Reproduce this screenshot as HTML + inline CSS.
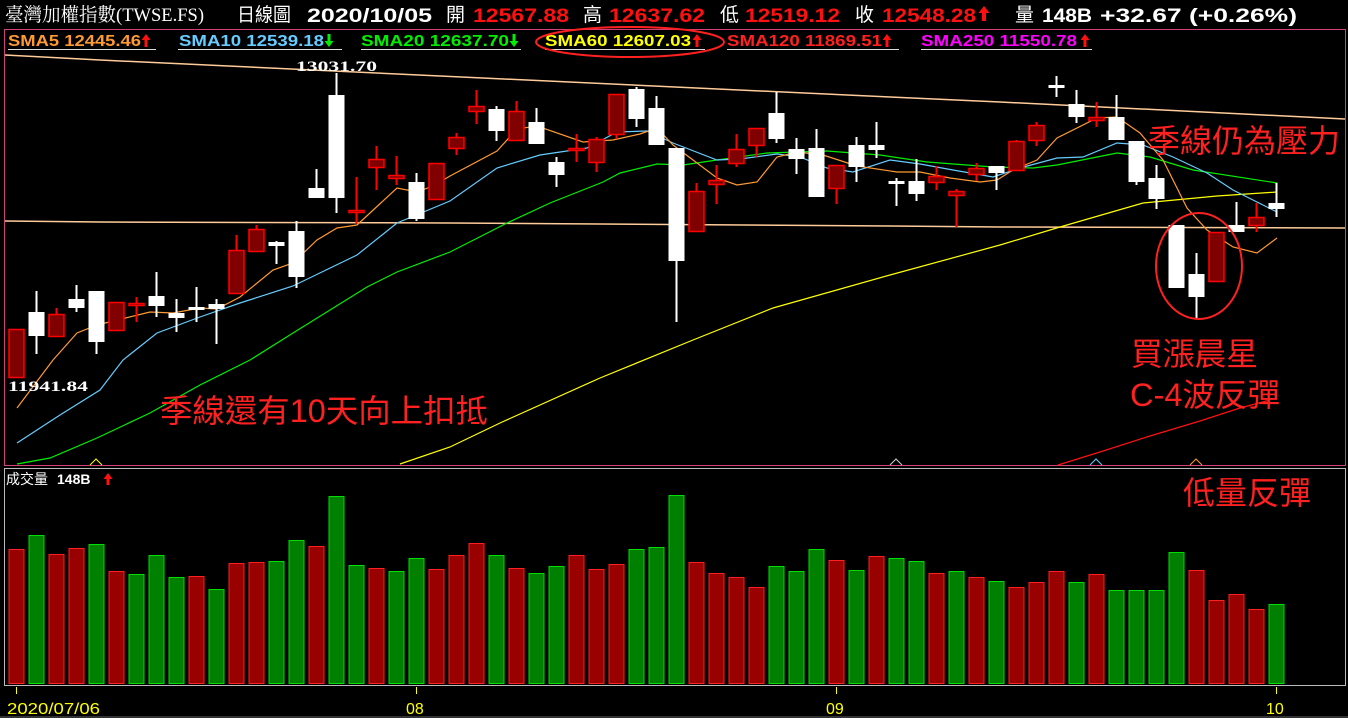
<!DOCTYPE html>
<html><head><meta charset="utf-8"><style>
html,body{margin:0;padding:0;background:#000;width:1348px;height:718px;overflow:hidden}
svg{display:block}
.h{font-family:"Liberation Sans","Noto Sans CJK TC",sans-serif;font-size:19px;fill:#fff}
.b{font-weight:bold}
.r{fill:#ff1010}
.s{font-family:"Liberation Sans",sans-serif;font-size:16px;font-weight:bold}
.a{font-family:"Liberation Sans","Noto Sans CJK TC",sans-serif;font-size:32px;fill:#ff2020}
</style></head><body>
<svg id="c" width="1348" height="718" xmlns="http://www.w3.org/2000/svg">
<rect width="1348" height="718" fill="#000"/>
<!-- header -->
<text class="h" x="5" y="21" textLength="199" lengthAdjust="spacingAndGlyphs" style="font-family:'Liberation Serif','Noto Serif CJK SC',serif">臺灣加權指數(TWSE.FS)</text>
<text class="h" x="237" y="21" textLength="54" lengthAdjust="spacingAndGlyphs">日線圖</text>
<text class="h b" x="307" y="22" textLength="125" lengthAdjust="spacingAndGlyphs">2020/10/05</text>
<text class="h" x="446" y="21">開</text>
<text class="h b r" x="473" y="22" textLength="96" lengthAdjust="spacingAndGlyphs">12567.88</text>
<text class="h" x="583" y="21">高</text>
<text class="h b r" x="609" y="22" textLength="96" lengthAdjust="spacingAndGlyphs">12637.62</text>
<text class="h" x="720" y="21">低</text>
<text class="h b r" x="745" y="22" textLength="95" lengthAdjust="spacingAndGlyphs">12519.12</text>
<text class="h" x="855" y="21">收</text>
<text class="h b r" x="882" y="22" textLength="94" lengthAdjust="spacingAndGlyphs">12548.28</text>
<path d="M984 6 l-5.5 7 h3.5 v8 h4 v-8 h3.5 z" fill="#ff1010"/>
<text class="h" x="1015" y="21">量</text>
<text class="h b" x="1042" y="22" textLength="50" lengthAdjust="spacingAndGlyphs">148B</text>
<text class="h b" x="1100" y="22" textLength="197" lengthAdjust="spacingAndGlyphs">+32.67 (+0.26%)</text>
<!-- frames -->
<rect x="4.5" y="29.5" width="1341" height="436" fill="none" stroke="#d0407a" stroke-width="1"/>
<rect x="4.5" y="468.5" width="1341" height="217" fill="none" stroke="#bbbbbb" stroke-width="1"/>
<!-- SMA legend -->
<text class="s" x="8" y="46" fill="#ff9933" textLength="133" lengthAdjust="spacingAndGlyphs">SMA5 12445.46</text>
<text class="s" x="179" y="46" fill="#66ccff" textLength="145" lengthAdjust="spacingAndGlyphs">SMA10 12539.18</text>
<text class="s" x="361" y="46" fill="#00ee00" textLength="148" lengthAdjust="spacingAndGlyphs">SMA20 12637.70</text>
<text class="s" x="545" y="46" fill="#ffff00" textLength="146" lengthAdjust="spacingAndGlyphs">SMA60 12607.03</text>
<text class="s" x="727" y="46" fill="#ff2020" textLength="155" lengthAdjust="spacingAndGlyphs">SMA120 11869.51</text>
<text class="s" x="921" y="46" fill="#ff00ff" textLength="156" lengthAdjust="spacingAndGlyphs">SMA250 11550.78</text>
<g id="arrows"></g>
<g stroke="#ddd" stroke-width="1">
<line x1="8" y1="49.5" x2="156" y2="49.5"/><line x1="178" y1="49.5" x2="342" y2="49.5"/>
<line x1="361" y1="49.5" x2="521" y2="49.5"/><line x1="545" y1="49.5" x2="705" y2="49.5"/>
<line x1="727" y1="49.5" x2="899" y2="49.5"/><line x1="921" y1="49.5" x2="1092" y2="49.5"/>
</g>
<ellipse cx="630" cy="42" rx="94" ry="15" fill="none" stroke="#ff2020" stroke-width="2"/>
<!-- trend lines -->
<polyline fill="none" stroke="#ffcc99" stroke-width="1.5" points="5,55 100,60 440,76 890,97 1000,102 1345,119"/>
<polyline fill="none" stroke="#ffcc99" stroke-width="1.5" points="5,221 100,222 450,223 890,226 1000,227 1345,228"/>
<!-- MAs -->
<polyline fill="none" stroke="#ffff00" stroke-width="1.2" points="400,464 450,447 500,423 600,378 693,340 773,308 890,275 1000,245 1060,227 1143,203 1217,196 1277,192"/>
<polyline fill="none" stroke="#ff1010" stroke-width="1.2" points="1058,465 1100,452 1150,436 1200,421 1240,408 1270,400"/>
<polyline fill="none" stroke="#00ee00" stroke-width="1.2" points="17,464 50,458 97,438 150,413 200,385 250,360 293,333 367,287 397,272 450,252 507,223 550,203 603,182 620,173 657,164 683,165 717,160 767,153 827,151 880,155 927,162 993,167 1033,168 1057,165 1097,157 1117,153 1150,157 1193,170 1277,183"/>
<polyline fill="none" stroke="#66ccff" stroke-width="1.2" points="17,443 60,415 100,390 123,360 157,333 200,317 240,303 293,286 357,255 397,223 450,201 497,168 540,155 587,148 617,132 647,131 673,143 717,160 740,159 777,154 800,157 827,168 853,172 890,160 920,164 953,170 993,177 1020,168 1057,158 1083,157 1117,143 1143,145 1173,157 1207,173 1233,190 1277,212"/>
<polyline fill="none" stroke="#ff9933" stroke-width="1.2" points="17,408 53,360 77,333 97,325 150,312 173,313 200,308 217,309 240,297 273,270 293,263 317,240 337,228 357,225 397,188 417,192 433,186 450,176 497,151 517,129 537,126 583,142 613,140 640,134 657,128 673,145 717,178 737,185 757,182 777,157 797,152 823,155 857,166 897,172 920,172 950,178 980,182 997,180 1013,170 1037,160 1057,138 1097,118 1117,117 1140,133 1163,160 1187,208 1207,230 1233,247 1257,253 1277,238"/>
<g id="cd"></g>
<!-- labels -->
<text x="296" y="71" fill="#fff" font-family="Liberation Serif,serif" font-weight="bold" font-size="15" textLength="81" lengthAdjust="spacingAndGlyphs">13031.70</text>
<text x="8" y="391" fill="#fff" font-family="Liberation Serif,serif" font-weight="bold" font-size="15" textLength="80" lengthAdjust="spacingAndGlyphs">11941.84</text>
<!-- triangles -->
<g fill="none" stroke-width="1">
<polyline points="90,465 96,459 102,465" stroke="#ffff00"/>
<polyline points="890,465 896,459 902,465" stroke="#cccccc"/>
<polyline points="1090,465 1096,459 1102,465" stroke="#66ccff"/>
<polyline points="1190,465 1196,459 1202,465" stroke="#ff9933"/>
</g>
<ellipse cx="1199" cy="266" rx="43" ry="53" fill="none" stroke="#ff2020" stroke-width="2"/>
<!-- annotations -->
<text class="a" x="1148" y="152" textLength="192" lengthAdjust="spacingAndGlyphs">季線仍為壓力</text>
<text class="a" x="1131" y="365" textLength="127" lengthAdjust="spacingAndGlyphs">買漲晨星</text>
<text class="a" x="1130" y="406" textLength="150" lengthAdjust="spacingAndGlyphs">C-4波反彈</text>
<text class="a" x="160" y="422" textLength="328" lengthAdjust="spacingAndGlyphs">季線還有10天向上扣抵</text>
<text class="a" x="1183" y="504" textLength="128" lengthAdjust="spacingAndGlyphs">低量反彈</text>
<!-- volume -->
<text x="6" y="484" fill="#fff" font-family="Liberation Sans,Noto Sans CJK TC,sans-serif" font-size="14">成交量</text>
<text x="57" y="484" fill="#fff" font-family="Liberation Sans,sans-serif" font-weight="bold" font-size="14">148B</text>
<path d="M108 473 l-4.5 6 h3 v6 h3 v-6 h3 z" fill="#ff1010"/>
<g id="vol"></g>
<!-- axis -->
<g stroke="#ffff00" stroke-width="1">
<line x1="16.5" y1="687" x2="16.5" y2="694"/><line x1="416.5" y1="687" x2="416.5" y2="694"/>
<line x1="836.5" y1="687" x2="836.5" y2="694"/><line x1="1276.5" y1="687" x2="1276.5" y2="694"/>
</g>
<g fill="#ffff00" font-family="Liberation Sans,sans-serif" font-size="16">
<text x="7" y="714" textLength="93" lengthAdjust="spacingAndGlyphs">2020/07/06</text><text x="406" y="714">08</text><text x="826" y="714">09</text><text x="1266" y="714">10</text>
</g>
<rect x="0" y="716" width="1348" height="2" fill="#333"/>
</svg>
<script>
var NS="http://www.w3.org/2000/svg";
function el(p,t,a){var e=document.createElementNS(NS,t);for(var k in a)e.setAttribute(k,a[k]);p.appendChild(e);return e;}
var C=[["r",329,378],["w",312,336,291,354],["r",314,337,308,337],["w",299,308,285,312],["w",291,342,291,354],["r",302,331],["r",303,306,297,322],["w",296,306,272,317],["w",313,318,299,332],["w",307,310,287,322],["w",304,309,299,344],["r",250,294,235,294],["r",229,252,225,252],["w",242,246,241,264],["w",231,277,221,288],["w",188,198,169,198],["w",95,198,73,213],["r",210,213,177,224],["r",159,168,146,190],["r",175,179,156,185],["w",182,219,173,221],["r",163,200],["r",137,149,133,155],["r",106,112,90,124],["w",109,131,106,141],["r",111,141,101,141],["w",122,144,108,144],["w",162,175,157,187],["r",148,150,134,162],["r",139,163,137,172],["r",94,135,94,139],["w",89,119,87,127],["w",108,145,96,145],["w",148,261,148,322],["r",191,232,183,232],["r",180,185,165,204],["r",149,164,134,167],["r",128,146,128,157],["w",113,139,92,143],["w",149,159,138,174],["w",148,197,129,197],["r",165,189,165,204],["w",145,167,137,182],["w",145,150,122,158],["w",181,184,178,206],["w",181,194,159,201],["r",176,183,166,190],["r",191,196,189,227],["r",168,175,163,181],["w",166,173,166,190],["r",141,171,140,171],["r",125,141,122,146],["w",85,88,76,97],["w",104,117,90,123],["r",117,121,102,127],["w",117,140,95,140],["w",141,182,141,185],["w",178,199,165,209],["w",225,288],["w",274,297,253,318],["r",232,282],["w",225,232,202,232],["r",217,226,203,232],["w",203,209,183,217]];
var g=document.getElementById("cd");
C.forEach(function(d,i){var c=16.5+20*i,red=d[0]=="r",col=red?"#ff0000":"#ffffff";
 if(d.length>3)el(g,"line",{x1:c,x2:c,y1:d[3],y2:d[4],stroke:col,"stroke-width":2});
 var h=Math.max(d[2]-d[1],3);
 if(red)el(g,"rect",{x:c-7.5,y:d[1]+0.5,width:15,height:h-1,fill:"#800000",stroke:"#ff0000","stroke-width":1.5});
 else el(g,"rect",{x:c-8,y:d[1],width:16,height:h,fill:"#fff"});});
var V=[549,535,554,548,544,571,574,555,577,576,589,563,562,561,540,546,496,565,568,571,558,569,555,543,555,568,573,566,555,569,564,549,547,495,562,573,577,587,566,571,549,560,570,556,558,561,573,571,577,581,587,582,571,582,574,590,590,590,552,570,600,594,609,604];
var VC="rgrrgrgggrgrrggrggrggrrrgrggrrrgggrrrrgggrgrggrgrgrrrgrggggrrrr";
var v=document.getElementById("vol");
V.forEach(function(t,i){var c=16.5+20*i,r=VC[i]=="r";
 el(v,"rect",{x:c-7.5,y:t+0.5,width:15,height:683-t,fill:r?"#990000":"#008000",stroke:r?"#ff2020":"#00dd00","stroke-width":1});});
var A=document.getElementById("arrows");
[[146,"#ff1010",1],[329,"#00ee00",0],[514,"#00ee00",0],[697,"#ff1010",1],[887,"#ff1010",1],[1085,"#ff1010",1]].forEach(function(a){
 var x=a[0];var d=a[2]?"M"+x+" 34 l-4.5 6 h3 v7 h3 v-7 h3 z":"M"+x+" 47 l-4.5 -6 h3 v-7 h3 v7 h3 z";
 el(A,"path",{d:d,fill:a[1]});});
</script>
</body></html>
